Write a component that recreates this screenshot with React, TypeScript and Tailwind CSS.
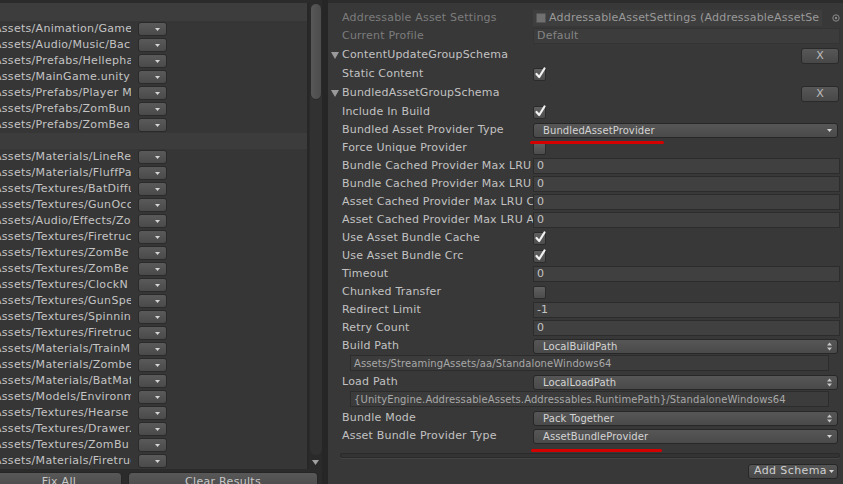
import type { ReactNode } from "react";

const font = { fontFamily: '"DejaVu Sans", Verdana, sans-serif' };

const groupA = [
  "Assets/Animation/GameManager.controller",
  "Assets/Audio/Music/Background.mp3",
  "Assets/Prefabs/Hellephant.prefab",
  "Assets/MainGame.unity",
  "Assets/Prefabs/Player Model.prefab",
  "Assets/Prefabs/ZomBunny.prefab",
  "Assets/Prefabs/ZomBear.prefab",
];

const groupB = [
  "Assets/Materials/LineRenderer.mat",
  "Assets/Materials/FluffParticle.mat",
  "Assets/Textures/BatDiffuse.png",
  "Assets/Textures/GunOcclusion.png",
  "Assets/Audio/Effects/Zo mbunny.wav",
  "Assets/Textures/FiretruckDiffuse.png",
  "Assets/Textures/ZomBe arDiffuse.png",
  "Assets/Textures/ZomBe arNormal.png",
  "Assets/Textures/ClockN Diffuse.png",
  "Assets/Textures/GunSpecular.png",
  "Assets/Textures/SpinningTop.png",
  "Assets/Textures/FiretruckNormal.png",
  "Assets/Materials/TrainMat.mat",
  "Assets/Materials/Zombe ar.mat",
  "Assets/Materials/BatMat .mat",
  "Assets/Models/Environment.fbx",
  "Assets/Textures/Hearse Diffuse.png",
  "Assets/Textures/Drawer.png",
  "Assets/Textures/ZomBu nny.png",
  "Assets/Materials/Firetruck.mat",
];

function DownArrow() {
  return (
    <svg width="5" height="3" viewBox="0 0 5 3">
      <path d="M0 0 H5 L2.5 3 Z" fill="#d6d6d6" />
    </svg>
  );
}

function UpDownArrow() {
  return (
    <svg width="5" height="9" viewBox="0 0 5 9">
      <path d="M0 3.5 H5 L2.5 0.5 Z" fill="#c8c8c8" />
      <path d="M0 5.5 H5 L2.5 8.5 Z" fill="#c8c8c8" />
    </svg>
  );
}

function AssetRow({ path }: { path: string }) {
  return (
    <div className="flex h-[16px] shrink-0 items-center">
      <div className="-ml-[6px] w-[137px] shrink-0 overflow-hidden whitespace-nowrap text-[11px] leading-[16px] tracking-[0.3px] text-[#c4c4c4]">
        {path}
      </div>
      <div className="ml-[7px] flex h-[14px] w-[29px] shrink-0 items-center justify-end rounded-[3px] border border-[#2a2a2a] bg-linear-to-b from-[#5a5a5a] to-[#4a4a4a] pr-[6px]">
        <DownArrow />
      </div>
    </div>
  );
}

function Check({ on }: { on?: boolean }) {
  return (
    <div className="relative h-[13px] w-[13px] rounded-[2px] border border-[#2b2b2b] bg-linear-to-b from-[#606060] to-[#4c4c4c]">
      {on && (
        <svg width="13" height="14" viewBox="0 0 13 14" className="absolute -top-[3px] left-0 overflow-visible">
          <path d="M2.5 8 L5.2 11 L10.5 2.5" fill="none" stroke="#f2f2f2" strokeWidth="2.2" strokeLinecap="round" strokeLinejoin="round" />
        </svg>
      )}
    </div>
  );
}

function Field({ value }: { value: string }) {
  return (
    <div className="flex h-[16px] flex-1 items-center border border-[#2c2c2c] bg-[#404040] pl-[3px] text-[11px] text-[#c4c4c4]">
      {value}
    </div>
  );
}

function Popup({ value, updown }: { value: string; updown?: boolean }) {
  return (
    <div className="mr-[2px] flex h-[15px] flex-1 items-center justify-between rounded-[3px] border border-[#272727] bg-linear-to-b from-[#565656] to-[#4a4a4a] pl-[9px] pr-[5px] text-[10px] tracking-[0.1px] text-[#d4d4d4]">
      <span>{value}</span>
      {updown ? <UpDownArrow /> : <DownArrow />}
    </div>
  );
}

function Row({ label, dim, children }: { label: string; dim?: boolean; children?: ReactNode }) {
  return (
    <div className="flex h-[18px] shrink-0 items-center">
      <div
        className={`w-[205px] shrink-0 overflow-hidden whitespace-nowrap pl-[14px] text-[11px] tracking-[0.2px] ${
          dim ? "text-[#7c7c7c]" : "text-[#c2c2c2]"
        }`}
      >
        {label}
      </div>
      <div className="flex flex-1 items-center pr-[3px]">{children}</div>
    </div>
  );
}

function Header({ label }: { label: string }) {
  return (
    <div className="flex h-[20px] shrink-0 items-center">
      <div className="flex w-[205px] items-center pl-[3px] text-[11px] tracking-[0.2px] text-[#c2c2c2]">
        <svg width="8" height="7" viewBox="0 0 8 7" className="mr-[3px]">
          <path d="M0 0 H8 L4 7 Z" fill="#9a9a9a" />
        </svg>
        {label}
      </div>
      <div className="flex flex-1 justify-end pr-[4px] pt-[2px]">
        <div className="flex h-[16px] w-[38px] items-center justify-center rounded-[3px] border border-[#2a2a2a] bg-linear-to-b from-[#575757] to-[#484848] text-[11px] text-[#bdbdbd]">
          X
        </div>
      </div>
    </div>
  );
}

function PathField({ value }: { value: string }) {
  return (
    <div className="flex h-[18px] shrink-0 items-start pl-[22px] pr-[14px]">
      <div className="flex h-[16px] flex-1 items-center overflow-hidden whitespace-nowrap border border-[#2c2c2c] bg-[#3c3c3c] pl-[3px] text-[10px] tracking-[0.1px] text-[#a8a8a8]">
        {value}
      </div>
    </div>
  );
}

export default function App() {
  return (
    <div className="flex h-[484px] w-[843px] overflow-hidden bg-[#383838]" style={font}>
      {/* left: results list */}
      <div className="flex w-[322px] shrink-0 flex-col overflow-hidden bg-[#2b2b2b]">
        <div className="h-[3px] shrink-0" />
        <div className="flex h-[466px] shrink-0">
          <div className="flex w-[307px] flex-col overflow-hidden bg-[#363636]">
            <div className="h-[18px] shrink-0 bg-[#3d3d3d]" />
            {groupA.map((p, i) => (
              <AssetRow key={"a" + i} path={p} />
            ))}
            <div className="h-[16px] shrink-0 bg-[#3c3c3c]" />
            {groupB.map((p, i) => (
              <AssetRow key={"b" + i} path={p} />
            ))}
          </div>
          <div className="flex w-[15px] flex-col items-center border-l-2 border-[#272727] bg-[#2a2a2a]">
            <div className="flex w-[12px] flex-1 flex-col rounded-full bg-[#313131]">
              <div className="h-[97px] rounded-full border border-[#2a2a2a] bg-linear-to-r from-[#585858] to-[#4c4c4c]" />
            </div>
            <div className="flex h-[14px] items-center">
              <svg width="7" height="5" viewBox="0 0 7 5">
                <path d="M0 0 H7 L3.5 5 Z" fill="#a0a0a0" />
              </svg>
            </div>
          </div>
        </div>
        <div className="flex shrink-0 gap-[6px] pt-[3px]">
          <div className="-ml-[4px] flex h-[18px] w-[126px] shrink-0 items-start justify-center rounded-t-[4px] border border-[#262626] bg-linear-to-b from-[#585858] to-[#4a4a4a] pt-[1px] text-[11px] tracking-[0.3px] text-[#c8c8c8]">
            Fix All
          </div>
          <div className="flex h-[18px] w-[190px] shrink-0 items-start justify-center rounded-t-[4px] border border-[#262626] bg-linear-to-b from-[#585858] to-[#4a4a4a] pt-[1px] text-[11px] tracking-[0.3px] text-[#c8c8c8]">
            Clear Results
          </div>
        </div>
      </div>
      <div className="w-[6px] shrink-0 bg-[#262626]" />

      {/* right: inspector */}
      <div className="relative flex flex-1 flex-col border-t-[3px] border-[#2c2c2c] pt-[6px]">
        <Row label="Addressable Asset Settings" dim>
          <div className="flex h-[16px] w-[289px] items-center overflow-hidden bg-[#3e3e3e] pl-[3px] text-[11px] tracking-[0.2px] text-[#9a9a9a]">
            <div className="mr-[3px] h-[10px] w-[10px] shrink-0 rounded-[1px] border border-[#555] bg-[#707070]" />
            <span className="whitespace-nowrap">AddressableAssetSettings (AddressableAssetSe</span>
          </div>
          <svg width="8" height="8" viewBox="0 0 8 8" className="ml-[10px]">
            <circle cx="4" cy="4" r="3.2" fill="none" stroke="#8a8a8a" strokeWidth="1" />
            <circle cx="4" cy="4" r="1.2" fill="#8a8a8a" />
          </svg>
        </Row>
        <Row label="Current Profile" dim>
          <div className="flex h-[16px] flex-1 items-center border border-[#343434] bg-[#3c3c3c] pl-[3px] text-[11px] tracking-[0.2px] text-[#858585]">
            Default
          </div>
        </Row>
        <Header label="ContentUpdateGroupSchema" />
        <Row label="Static Content">
          <Check on />
        </Row>
        <Header label="BundledAssetGroupSchema" />
        <Row label="Include In Build">
          <Check on />
        </Row>
        <Row label="Bundled Asset Provider Type">
          <Popup value="BundledAssetProvider" />
        </Row>
        <Row label="Force Unique Provider">
          <Check />
        </Row>
        <Row label="Bundle Cached Provider Max LRU Count">
          <Field value="0" />
        </Row>
        <Row label="Bundle Cached Provider Max LRU Age">
          <Field value="0" />
        </Row>
        <Row label="Asset Cached Provider Max LRU Count">
          <Field value="0" />
        </Row>
        <Row label="Asset Cached Provider Max LRU Age">
          <Field value="0" />
        </Row>
        <Row label="Use Asset Bundle Cache">
          <Check on />
        </Row>
        <Row label="Use Asset Bundle Crc">
          <Check on />
        </Row>
        <Row label="Timeout">
          <Field value="0" />
        </Row>
        <Row label="Chunked Transfer">
          <Check />
        </Row>
        <Row label="Redirect Limit">
          <Field value="-1" />
        </Row>
        <Row label="Retry Count">
          <Field value="0" />
        </Row>
        <Row label="Build Path">
          <Popup value="LocalBuildPath" updown />
        </Row>
        <PathField value="Assets/StreamingAssets/aa/StandaloneWindows64" />
        <Row label="Load Path">
          <Popup value="LocalLoadPath" updown />
        </Row>
        <PathField value="{UnityEngine.AddressableAssets.Addressables.RuntimePath}/StandaloneWindows64" />
        <Row label="Bundle Mode">
          <Popup value="Pack Together" updown />
        </Row>
        <Row label="Asset Bundle Provider Type">
          <Popup value="AssetBundleProvider" />
        </Row>
        <div className="mt-[8px] ml-[12px] mr-[3px] h-[5px] shrink-0 rounded-[2px] border border-[#2a2a2a] bg-[#333333] shadow-[0_1px_0_#444]" />
        <div className="mt-[6px] flex shrink-0 justify-end pr-[5px]">
          <div className="flex h-[15px] items-center gap-[2px] rounded-[3px] border border-[#272727] bg-linear-to-b from-[#565656] to-[#484848] pl-[5px] pr-[3px] text-[11px] tracking-[0.4px] text-[#cfcfcf]">
            Add Schema
            <DownArrow />
          </div>
        </div>

        {/* red annotation strokes */}
        <div className="absolute left-[202px] top-[138px] h-[3px] w-[134px] rounded-full bg-[#d40000]" />
        <div className="absolute left-[203px] top-[446px] h-[3px] w-[131px] rounded-full bg-[#d40000]" />
      </div>
    </div>
  );
}
